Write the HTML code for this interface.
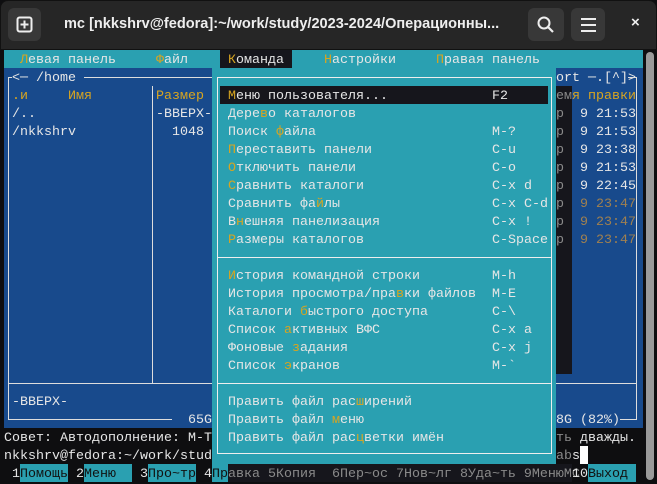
<!DOCTYPE html>
<html><head><meta charset="utf-8"><style>
*{margin:0;padding:0;box-sizing:border-box}
body{width:657px;height:482px;background:#0e0e10;overflow:hidden;position:relative;font-family:"Liberation Mono","DejaVu Sans Mono",monospace;font-size:13.33px;color:#e6e6e6}
.a{position:absolute;white-space:pre;line-height:18px;height:18px;margin-top:2px}
.y{color:#d8a520}
.g{color:#8a8a8a}
.w{color:#fff}
</style></head><body>
<!-- title bar -->
<div style="position:absolute;left:0;top:0;width:657px;height:50px;background:#262626;border-radius:8px 8px 0 0;border:1px solid #111"></div>
<div style="position:absolute;left:8px;top:8px;width:33px;height:33px;background:#383838;border-radius:6px"></div>
<svg style="position:absolute;left:16px;top:16px" width="17" height="17" viewBox="0 0 17 17"><rect x="1.5" y="1.5" width="14" height="14" rx="2" fill="none" stroke="#eee" stroke-width="2"/><path d="M8.5 4.5v8M4.5 8.5h8" stroke="#eee" stroke-width="2"/></svg>
<div style="position:absolute;left:64px;top:13px;white-space:pre;font-family:'Liberation Sans','DejaVu Sans',sans-serif;font-size:15px;font-weight:bold;color:#eee;line-height:22px;transform:scaleX(0.97);transform-origin:0 0">mc [nkkshrv@fedora]:~/work/study/2023-2024/Операционны...</div>
<div style="position:absolute;left:528px;top:8px;width:36px;height:33px;background:#383838;border-radius:6px"></div>
<svg style="position:absolute;left:536px;top:15px" width="20" height="20" viewBox="0 0 20 20"><circle cx="8" cy="8" r="5.5" fill="none" stroke="#eee" stroke-width="2"/><path d="M12 12l5 5" stroke="#eee" stroke-width="2.2"/></svg>
<div style="position:absolute;left:571px;top:8px;width:34px;height:33px;background:#383838;border-radius:6px"></div>
<div style="position:absolute;left:581px;top:18px;width:15px;height:2px;background:#eee;box-shadow:0 6px 0 #eee,0 12px 0 #eee"></div>
<div style="position:absolute;left:631px;top:14px;color:#eee;font-family:'Liberation Sans',sans-serif;font-size:15px;font-weight:bold">×</div>
<!-- scrollbar -->
<div style="position:absolute;left:646px;top:52px;width:8px;height:428px;background:#9a9a9a;border-radius:4px"></div>
<!-- menu bar -->
<div style="position:absolute;left:4px;top:50px;width:639px;height:18px;background:#2aa0b1"></div>
<div style="position:absolute;left:220px;top:50px;width:72px;height:18px;background:#16161c"></div>
<div class="a" style="left:20px;top:50px"><span class="y">Л</span>евая панель</div>
<div class="a" style="left:156px;top:50px"><span class="y">Ф</span>айл</div>
<div class="a" style="left:228px;top:50px"><span class="y">К</span>оманда</div>
<div class="a" style="left:324px;top:50px"><span class="y">Н</span>астройки</div>
<div class="a" style="left:436px;top:50px"><span class="y">П</span>равая панель</div>
<!-- left panel -->
<div style="position:absolute;left:4px;top:68px;width:208px;height:360px;background:#184a8c"></div>
<div style="position:absolute;left:8px;top:77px;width:1px;height:343px;background:#ddd"></div>
<div style="position:absolute;left:8px;top:77px;width:204px;height:1px;background:#ddd"></div>
<div style="position:absolute;left:8px;top:419px;width:164px;height:1px;background:#ddd"></div>
<div style="position:absolute;left:8px;top:383px;width:204px;height:1px;background:#ddd"></div>
<div style="position:absolute;left:152px;top:86px;width:1px;height:297px;background:#ddd"></div>
<div style="position:absolute;left:12px;top:70px;width:72px;height:14px;background:#184a8c"></div>
<div class="a" style="left:12px;top:68px">&lt;─ /home </div>
<div class="a y" style="left:12px;top:86px">.и     Имя</div>
<div class="a y" style="left:156px;top:86px">Размер</div>
<div class="a" style="left:12px;top:104px">/..</div>
<div class="a" style="left:156px;top:104px">-ВВЕРХ-</div>
<div class="a" style="left:12px;top:122px">/nkkshrv</div>
<div class="a" style="left:172px;top:122px">1048</div>
<div class="a" style="left:12px;top:392px">-ВВЕРХ-</div>
<div style="position:absolute;left:172px;top:412px;width:40px;height:14px;background:#184a8c"></div>
<div class="a" style="left:180px;top:410px"> 65G</div>
<!-- right panel -->
<div style="position:absolute;left:556px;top:68px;width:87px;height:360px;background:#184a8c"></div>
<div style="position:absolute;left:636px;top:77px;width:1px;height:343px;background:#ddd"></div>
<div style="position:absolute;left:556px;top:383px;width:80px;height:1px;background:#ddd"></div>
<div style="position:absolute;left:620px;top:419px;width:16px;height:1px;background:#ddd"></div>
<div class="a" style="left:556px;top:68px">ort ─.[^]&gt;</div>
<div style="position:absolute;left:628px;top:77px;width:9px;height:1px;background:#ddd"></div>
<div style="position:absolute;left:556px;top:86px;width:16px;height:288px;background:#16161c"></div>
<div class="a" style="left:556px;top:86px"><span class="g">ем</span><span class="y">я правки</span></div>
<div class="a" style="left:556px;top:104px"><span class="g">р</span>  9 21:53</div>
<div class="a" style="left:556px;top:122px"><span class="g">р</span>  9 21:53</div>
<div class="a" style="left:556px;top:140px"><span class="g">р</span>  9 23:38</div>
<div class="a" style="left:556px;top:158px"><span class="g">р</span>  9 21:53</div>
<div class="a" style="left:556px;top:176px"><span class="g">р</span>  9 22:45</div>
<div class="a" style="left:556px;top:194px;color:#a08050"><span class="g">р</span>  9 23:47</div>
<div class="a" style="left:556px;top:212px;color:#a08050"><span class="g">р</span>  9 23:47</div>
<div class="a" style="left:556px;top:230px;color:#a08050"><span class="g">р</span>  9 23:47</div>
<div class="a" style="left:556px;top:410px">8G (82%)</div>
<!-- bottom lines -->
<div class="a" style="left:4px;top:428px">Совет: Автодополнение: M-T</div>
<div class="a" style="left:556px;top:428px"><span class="g">ть</span> дважды.</div>
<div class="a" style="left:4px;top:446px">nkkshrv@fedora:~/work/stud</div>
<div class="a" style="left:556px;top:446px"><span class="g">ab</span>s</div>
<div style="position:absolute;left:580px;top:446px;width:8px;height:18px;background:#fff"></div>
<!-- function keys -->
<div style="position:absolute;left:20px;top:464px;width:48px;height:18px;background:#2aa0b1"></div>
<div style="position:absolute;left:84px;top:464px;width:48px;height:18px;background:#2aa0b1"></div>
<div style="position:absolute;left:148px;top:464px;width:48px;height:18px;background:#2aa0b1"></div>
<div style="position:absolute;left:212px;top:464px;width:16px;height:18px;background:#2aa0b1"></div>
<div style="position:absolute;left:588px;top:464px;width:48px;height:18px;background:#2aa0b1"></div>
<div class="a" style="left:4px;top:464px"> 1<span style="color:#111">Помощь</span> 2<span style="color:#111">Меню  </span> 3<span style="color:#111">Про~тр</span> 4<span style="color:#111">Пр</span></div>
<div style="position:absolute;left:228px;top:464px;width:344px;height:18px;background:#16161c"></div>
<div class="a g" style="left:228px;top:464px">авка 5Копия  6Пер~ос 7Нов~лг 8Уда~ть 9МенюМС</div>
<div class="a" style="left:572px;top:464px">10<span style="color:#111">Выход </span></div>
<!-- dropdown -->
<div style="position:absolute;left:212px;top:68px;width:344px;height:396px;background:#2aa0b1"></div>
<div style="position:absolute;left:217px;top:77px;width:335px;height:377px;border:1px solid #eee"></div>
<div style="position:absolute;left:217px;top:257px;width:335px;height:1px;background:#eee"></div>
<div style="position:absolute;left:217px;top:383px;width:335px;height:1px;background:#eee"></div>
<div style="position:absolute;left:220px;top:86px;width:328px;height:18px;background:#16161c"></div>
<div class="a" style="left:228px;top:86px"><span class="y">М</span>еню пользователя...</div><div class="a" style="left:492px;top:86px">F2</div>
<div class="a" style="left:228px;top:104px">Дере<span class="y">в</span>о каталогов</div>
<div class="a" style="left:228px;top:122px">Поиск <span class="y">ф</span>айла</div><div class="a" style="left:492px;top:122px">M-?</div>
<div class="a" style="left:228px;top:140px"><span class="y">П</span>ереставить панели</div><div class="a" style="left:492px;top:140px">C-u</div>
<div class="a" style="left:228px;top:158px"><span class="y">О</span>тключить панели</div><div class="a" style="left:492px;top:158px">C-o</div>
<div class="a" style="left:228px;top:176px"><span class="y">С</span>равнить каталоги</div><div class="a" style="left:492px;top:176px">C-x d</div>
<div class="a" style="left:228px;top:194px">Сравнить фа<span class="y">й</span>лы</div><div class="a" style="left:492px;top:194px">C-x C-d</div>
<div class="a" style="left:228px;top:212px">В<span class="y">н</span>ешняя панелизация</div><div class="a" style="left:492px;top:212px">C-x !</div>
<div class="a" style="left:228px;top:230px"><span class="y">Р</span>азмеры каталогов</div><div class="a" style="left:492px;top:230px">C-Space</div>
<div class="a" style="left:228px;top:266px"><span class="y">И</span>стория командной строки</div><div class="a" style="left:492px;top:266px">M-h</div>
<div class="a" style="left:228px;top:284px">История просмотра/пра<span class="y">в</span>ки файлов</div><div class="a" style="left:492px;top:284px">M-E</div>
<div class="a" style="left:228px;top:302px">Каталоги <span class="y">б</span>ыстрого доступа</div><div class="a" style="left:492px;top:302px">C-\</div>
<div class="a" style="left:228px;top:320px">Список <span class="y">а</span>ктивных ВФС</div><div class="a" style="left:492px;top:320px">C-x a</div>
<div class="a" style="left:228px;top:338px">Фоновые <span class="y">з</span>адания</div><div class="a" style="left:492px;top:338px">C-x j</div>
<div class="a" style="left:228px;top:356px">Список <span class="y">э</span>кранов</div><div class="a" style="left:492px;top:356px">M-`</div>
<div class="a" style="left:228px;top:392px">Править файл рас<span class="y">ш</span>ирений</div>
<div class="a" style="left:228px;top:410px">Править файл <span class="y">м</span>еню</div>
<div class="a" style="left:228px;top:428px">Править файл рас<span class="y">ц</span>ветки имён</div>
</body></html>
